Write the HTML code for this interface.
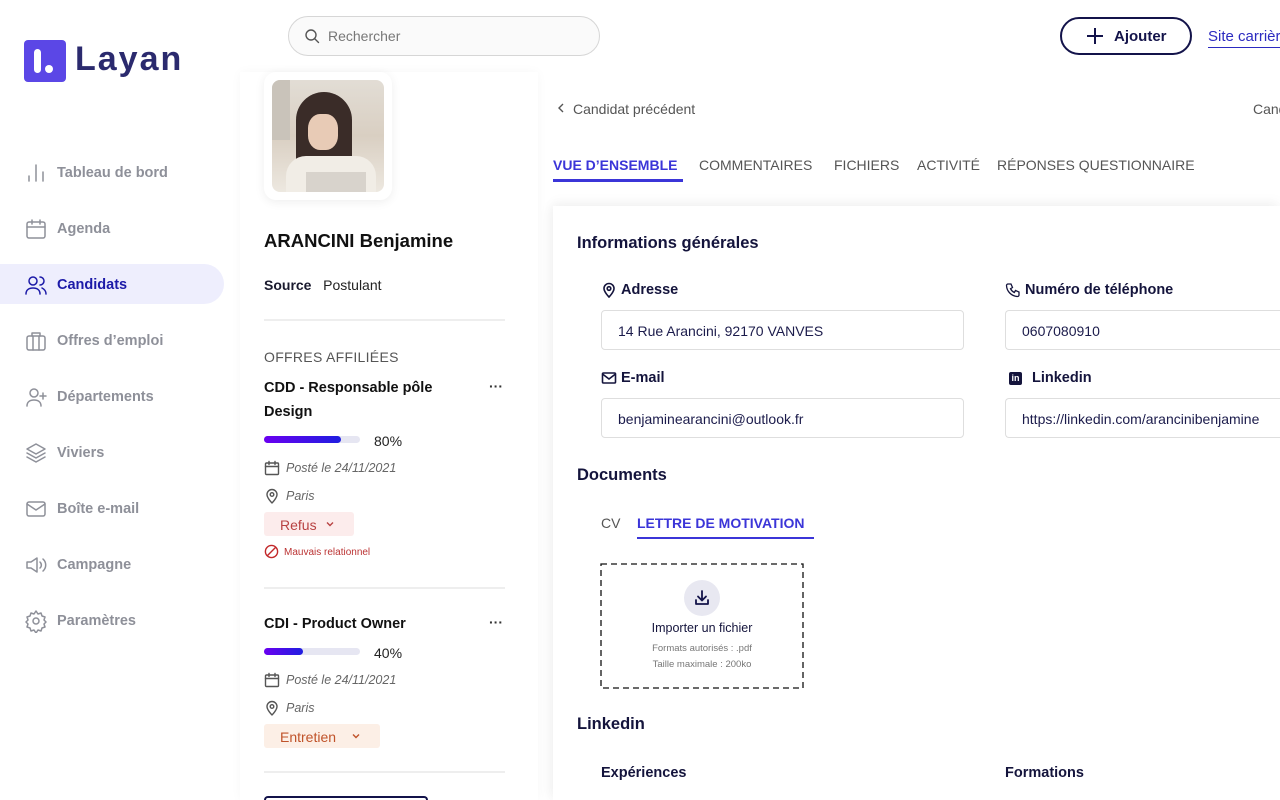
<!DOCTYPE html>
<html><head><meta charset="utf-8"><style>
*{box-sizing:border-box;margin:0;padding:0}
html{width:1280px;height:800px;overflow:hidden}
body{width:1280px;height:800px;overflow:hidden;background:#fff;font-family:"Liberation Sans",sans-serif;position:relative;color:#1a1a2e}
.abs{position:absolute}
.nav{position:absolute;left:24px;display:flex;align-items:center;font-size:14.5px;color:#8e9099;font-weight:bold}
.nav svg{width:24px;height:24px;margin-right:9px;fill:none;stroke:#8e9099;stroke-width:1.5;stroke-linecap:round;stroke-linejoin:round}
.t{position:absolute;white-space:nowrap}
.ic{fill:none;stroke:#555;stroke-width:1.4;stroke-linecap:round;stroke-linejoin:round}
.inp{position:absolute;height:40px;border:1px solid #dedede;border-radius:4px;font-size:14px;color:#1b1b4b;padding:12px 16px;white-space:nowrap;overflow:hidden}
.lbl{position:absolute;font-size:14.5px;font-weight:bold;color:#14143c;display:flex;align-items:center;gap:4px}
.lbl svg{width:16px;height:16px;fill:none;stroke:#14143c;stroke-width:1.6}
</style></head><body>

<!-- logo -->
<div class="abs" style="left:24px;top:40px;width:42px;height:42px;background:#5b47e6;border-radius:4px"></div>
<div class="abs" style="left:34px;top:49px;width:7px;height:24px;background:#fff;border-radius:4px"></div>
<div class="abs" style="left:45px;top:65px;width:8px;height:8px;background:#fff;border-radius:50%"></div>
<div class="t" style="left:75px;top:40px;font-size:34px;font-weight:bold;color:#2b2a6e;letter-spacing:2px">Layan</div>

<!-- nav -->
<div class="abs" style="left:0;top:264px;width:224px;height:40px;background:#eeeefd;border-radius:0 20px 20px 0"></div>
<div class="nav" style="top:161px"><svg viewBox="0 0 24 24"><path d="M5 20v-5M12 20V4M19 20v-9"/></svg>Tableau de bord</div>
<div class="nav" style="top:217px"><svg viewBox="0 0 24 24"><rect x="3" y="5" width="18" height="16" rx="2"/><path d="M3 10h18M8 3v4M16 3v4"/></svg>Agenda</div>
<div class="nav" style="top:273px;color:#1c1aa8"><svg viewBox="0 0 24 24" style="stroke:#1c1aa8"><circle cx="9" cy="8" r="4"/><path d="M2 21c0-4 3-6 7-6s7 2 7 6M16 4a4 4 0 0 1 0 8M18 15c2 1 4 3 4 6"/></svg>Candidats</div>
<div class="nav" style="top:329px"><svg viewBox="0 0 24 24"><rect x="3" y="7" width="18" height="14" rx="2"/><path d="M8 7V4h8v3M9 7v14M15 7v14"/></svg>Offres d’emploi</div>
<div class="nav" style="top:385px"><svg viewBox="0 0 24 24"><circle cx="10" cy="8" r="4"/><path d="M3 21c0-4 3-6 7-6s7 2 7 6M19 8v6M16 11h6"/></svg>Départements</div>
<div class="nav" style="top:441px"><svg viewBox="0 0 24 24"><path d="M12 3l9 5-9 5-9-5zM3 12l9 5 9-5M3 16l9 5 9-5"/></svg>Viviers</div>
<div class="nav" style="top:497px"><svg viewBox="0 0 24 24"><rect x="3" y="5" width="18" height="14" rx="2"/><path d="M3 7l9 6 9-6"/></svg>Boîte e-mail</div>
<div class="nav" style="top:553px"><svg viewBox="0 0 24 24"><path d="M3 9h4l6-4v14l-6-4H3zM16 9a4 4 0 0 1 0 6M19 6a8 8 0 0 1 0 12"/></svg>Campagne</div>
<div class="nav" style="top:609px"><svg viewBox="0 0 24 24"><circle cx="12" cy="12" r="3"/><path d="M12 2l2 3 3-1 1 3 3 1-1 3 2 2-2 2 1 3-3 1-1 3-3-1-2 3-2-3-3 1-1-3-3-1 1-3-2-2 2-2-1-3 3-1 1-3 3 1z"/></svg>Paramètres</div>

<!-- search -->
<div class="abs" style="left:288px;top:16px;width:312px;height:40px;border:1px solid #d6d6d6;border-radius:20px;background:#fafafa"></div>
<svg class="abs" style="left:304px;top:28px" width="16" height="16" viewBox="0 0 16 16"><circle cx="7" cy="7" r="5" class="ic" stroke="#444"/><path d="M11 11l3.5 3.5" class="ic"/></svg>
<div class="t" style="left:328px;top:28px;font-size:14px;color:#777">Rechercher</div>

<!-- top right -->
<div class="abs" style="left:1060px;top:17px;width:132px;height:38px;border:2px solid #13134a;border-radius:20px"></div>
<svg class="abs" style="left:1085px;top:26px" width="20" height="20" viewBox="0 0 20 20"><path d="M10 2v16M2 10h16" stroke="#13134a" stroke-width="2"/></svg>
<div class="t" style="left:1114px;top:28px;font-size:15px;font-weight:bold;color:#13134a">Ajouter</div>
<div class="t" style="left:1208px;top:28px;font-size:15px;color:#2b2ac0;border-bottom:1.5px solid #2b2ac0;padding-bottom:2px">Site carrière</div>

<!-- left panel -->
<div class="abs" style="left:240px;top:72px;width:298px;height:728px;background:#fff;box-shadow:0 0 10px rgba(0,0,0,0.035)"></div>
<div class="abs" style="left:264px;top:72px;width:128px;height:128px;background:#fff;border-radius:12px;box-shadow:0 2px 10px rgba(0,0,0,0.07)"></div>
<div class="abs" style="left:272px;top:80px;width:112px;height:112px;border-radius:8px;overflow:hidden;background:linear-gradient(180deg,#e2ddd5 0%,#d9cfc2 50%,#ede8e0 100%)">
 <div class="abs" style="left:0;top:0;width:18px;height:60px;background:#c9c3ba"></div>
 <div class="abs" style="left:24px;top:12px;width:56px;height:88px;background:#3a2c28;border-radius:28px 28px 10px 10px"></div>
 <div class="abs" style="left:36px;top:34px;width:30px;height:36px;background:#e8cbb6;border-radius:40%"></div>
 <div class="abs" style="left:14px;top:76px;width:90px;height:40px;background:#f1ede6;border-radius:20px 20px 0 0"></div>
 <div class="abs" style="left:34px;top:92px;width:60px;height:22px;background:#d8d3cc"></div>
</div>
<div class="t" style="left:264px;top:230px;font-size:18.5px;font-weight:bold;color:#111">ARANCINI Benjamine</div>
<div class="t" style="left:264px;top:277px;font-size:14px"><b>Source</b>&nbsp;&nbsp; <span style="color:#222">Postulant</span></div>
<div class="abs" style="left:264px;top:319px;width:241px;height:2px;background:#eee"></div>
<div class="t" style="left:264px;top:349px;font-size:14px;color:#555;letter-spacing:.3px">OFFRES AFFILIÉES</div>

<div class="t" style="left:264px;top:376px;font-size:14.5px;font-weight:bold;line-height:24px;color:#111">CDD - Responsable pôle<br>Design</div>
<div class="t" style="left:489px;top:378px;font-size:14px;font-weight:bold;color:#333">···</div>
<div class="abs" style="left:264px;top:436px;width:96px;height:7px;background:#e6e6f2;border-radius:4px"></div>
<div class="abs" style="left:264px;top:436px;width:77px;height:7px;background:linear-gradient(90deg,#6a00f0,#1f1ee0);border-radius:4px"></div>
<div class="t" style="left:374px;top:433px;font-size:14px;color:#222">80%</div>
<svg class="abs" style="left:264px;top:460px" width="16" height="16" viewBox="0 0 16 16"><rect x="1.5" y="3" width="13" height="11.5" rx="1" class="ic"/><path d="M1.5 6.5h13M5 1.5v3M11 1.5v3" class="ic"/></svg>
<div class="t" style="left:286px;top:461px;font-size:12.5px;font-style:italic;color:#666">Posté le 24/11/2021</div>
<svg class="abs" style="left:264px;top:488px" width="16" height="16" viewBox="0 0 16 16"><path d="M8 15s5-5 5-8.5A5 5 0 0 0 3 6.5C3 10 8 15 8 15z" class="ic"/><circle cx="8" cy="6.5" r="1.8" class="ic"/></svg>
<div class="t" style="left:286px;top:489px;font-size:12.5px;font-style:italic;color:#666">Paris</div>
<div class="abs" style="left:264px;top:512px;width:90px;height:24px;background:#fcecec;border-radius:3px"></div>
<div class="t" style="left:280px;top:517px;font-size:14px;color:#b84242">Refus</div>
<svg class="abs" style="left:325px;top:519px" width="10" height="10" viewBox="0 0 10 10"><path d="M2 3.5l3 3 3-3" fill="none" stroke="#b84242" stroke-width="1.4"/></svg>
<svg class="abs" style="left:264px;top:544px" width="15" height="15" viewBox="0 0 16 16"><circle cx="8" cy="8" r="6.5" fill="none" stroke="#c2282a" stroke-width="1.5"/><path d="M3.5 12.5l9-9" stroke="#c2282a" stroke-width="1.5"/></svg>
<div class="t" style="left:284px;top:547px;font-size:10px;color:#b33">Mauvais relationnel</div>
<div class="abs" style="left:264px;top:587px;width:241px;height:2px;background:#eee"></div>

<div class="t" style="left:264px;top:616px;font-size:14.5px;font-weight:bold;color:#111">CDI - Product Owner</div>
<div class="t" style="left:489px;top:614px;font-size:14px;font-weight:bold;color:#333">···</div>
<div class="abs" style="left:264px;top:648px;width:96px;height:7px;background:#e6e6f2;border-radius:4px"></div>
<div class="abs" style="left:264px;top:648px;width:39px;height:7px;background:linear-gradient(90deg,#6a00f0,#1f1ee0);border-radius:4px"></div>
<div class="t" style="left:374px;top:645px;font-size:14px;color:#222">40%</div>
<svg class="abs" style="left:264px;top:672px" width="16" height="16" viewBox="0 0 16 16"><rect x="1.5" y="3" width="13" height="11.5" rx="1" class="ic"/><path d="M1.5 6.5h13M5 1.5v3M11 1.5v3" class="ic"/></svg>
<div class="t" style="left:286px;top:673px;font-size:12.5px;font-style:italic;color:#666">Posté le 24/11/2021</div>
<svg class="abs" style="left:264px;top:700px" width="16" height="16" viewBox="0 0 16 16"><path d="M8 15s5-5 5-8.5A5 5 0 0 0 3 6.5C3 10 8 15 8 15z" class="ic"/><circle cx="8" cy="6.5" r="1.8" class="ic"/></svg>
<div class="t" style="left:286px;top:701px;font-size:12.5px;font-style:italic;color:#666">Paris</div>
<div class="abs" style="left:264px;top:724px;width:116px;height:24px;background:#fcefe6;border-radius:3px"></div>
<div class="t" style="left:280px;top:729px;font-size:14px;color:#c0532a">Entretien</div>
<svg class="abs" style="left:351px;top:731px" width="10" height="10" viewBox="0 0 10 10"><path d="M2 3.5l3 3 3-3" fill="none" stroke="#c0532a" stroke-width="1.4"/></svg>
<div class="abs" style="left:264px;top:771px;width:241px;height:2px;background:#eee"></div>
<div class="abs" style="left:264px;top:796px;width:164px;height:4px;border:2px solid #13134a;border-bottom:none;border-radius:16px 16px 0 0"></div>

<!-- right top -->
<svg class="abs" style="left:555px;top:102px" width="12" height="12" viewBox="0 0 12 12"><path d="M8 2L4 6l4 4" fill="none" stroke="#555" stroke-width="1.4"/></svg>
<div class="t" style="left:573px;top:101px;font-size:14px;color:#555">Candidat précédent</div>
<div class="t" style="left:1253px;top:101px;font-size:14px;color:#555">Candidat suivant</div>

<div class="t" style="left:553px;top:157px;font-size:14px;font-weight:bold;color:#3b35d8">VUE D’ENSEMBLE</div>
<div class="abs" style="left:553px;top:179px;width:130px;height:3px;background:#3b35d8"></div>
<div class="t" style="left:699px;top:157px;font-size:14px;color:#555">COMMENTAIRES</div>
<div class="t" style="left:834px;top:157px;font-size:14px;color:#555">FICHIERS</div>
<div class="t" style="left:917px;top:157px;font-size:14px;color:#555">ACTIVITÉ</div>
<div class="t" style="left:997px;top:157px;font-size:14px;color:#555">RÉPONSES QUESTIONNAIRE</div>

<!-- card -->
<div class="abs" style="left:553px;top:206px;width:727px;height:594px;background:#fff;box-shadow:-4px 0 12px rgba(0,0,0,0.04),0 -4px 12px rgba(0,0,0,0.04)"></div>
<div class="t" style="left:577px;top:234px;font-size:16.5px;font-weight:bold;color:#14143c">Informations générales</div>

<div class="lbl" style="left:601px;top:282px"><svg viewBox="0 0 16 16"><path d="M8 15s5-5 5-8.5A5 5 0 0 0 3 6.5C3 10 8 15 8 15z"/><circle cx="8" cy="6.5" r="1.8"/></svg>Adresse</div>
<div class="inp" style="left:601px;top:310px;width:363px">14 Rue Arancini, 92170 VANVES</div>
<div class="lbl" style="left:1005px;top:282px"><svg viewBox="0 0 16 16"><path d="M3 2h3l1.5 3.5-2 1.2a8 8 0 0 0 3.8 3.8l1.2-2L14 10v3a1.5 1.5 0 0 1-1.5 1.5A11.5 11.5 0 0 1 1.5 3.5 1.5 1.5 0 0 1 3 2z" stroke-width="1.3"/></svg>Numéro de téléphone</div>
<div class="inp" style="left:1005px;top:310px;width:275px;border-right:none;border-radius:4px 0 0 4px">0607080910</div>
<div class="lbl" style="left:601px;top:370px"><svg viewBox="0 0 16 16"><rect x="1.5" y="3" width="13" height="10" rx="1"/><path d="M1.5 4l6.5 5 6.5-5"/></svg>E-mail</div>
<div class="inp" style="left:601px;top:398px;width:363px">benjaminearancini@outlook.fr</div>
<div class="lbl" style="left:1009px;top:370px"><span style="display:inline-block;width:13px;height:13px;background:#14143c;border-radius:2px;color:#fff;font-size:9px;line-height:13px;text-align:center;margin-right:6px">in</span>Linkedin</div>
<div class="inp" style="left:1005px;top:398px;width:275px;border-right:none;border-radius:4px 0 0 4px">https://linkedin.com/arancinibenjamine</div>

<div class="t" style="left:577px;top:466px;font-size:16.5px;font-weight:bold;color:#14143c">Documents</div>
<div class="t" style="left:601px;top:515px;font-size:14px;color:#555">CV</div>
<div class="t" style="left:637px;top:515px;font-size:14px;font-weight:bold;color:#3b35d8">LETTRE DE MOTIVATION</div>
<div class="abs" style="left:637px;top:537px;width:177px;height:2px;background:#3b35d8"></div>

<svg class="abs" style="left:600px;top:563px" width="204" height="126"><rect x="1" y="1" width="202" height="124" fill="none" stroke="#111" stroke-width="1.3" stroke-dasharray="6 4"/></svg>
<div class="abs" style="left:684px;top:580px;width:36px;height:36px;border-radius:50%;background:#e8e8f1"></div>
<svg class="abs" style="left:692px;top:588px" width="20" height="20" viewBox="0 0 20 20"><path d="M10 3v9M6 8.5l4 4 4-4M4 12v4h12v-4" fill="none" stroke="#13134a" stroke-width="1.8" stroke-linecap="round" stroke-linejoin="round"/></svg>
<div class="t" style="left:601px;top:621px;width:202px;text-align:center;font-size:12.5px;color:#14143c">Importer un fichier</div>
<div class="t" style="left:601px;top:643px;width:202px;text-align:center;font-size:9.5px;color:#777">Formats autorisés : .pdf</div>
<div class="t" style="left:601px;top:659px;width:202px;text-align:center;font-size:9.5px;color:#777">Taille maximale : 200ko</div>

<div class="t" style="left:577px;top:715px;font-size:16.5px;font-weight:bold;color:#14143c">Linkedin</div>
<div class="t" style="left:601px;top:765px;font-size:14.5px;font-weight:bold;color:#14143c">Expériences</div>
<div class="t" style="left:1005px;top:765px;font-size:14.5px;font-weight:bold;color:#14143c">Formations</div>
</body></html>
